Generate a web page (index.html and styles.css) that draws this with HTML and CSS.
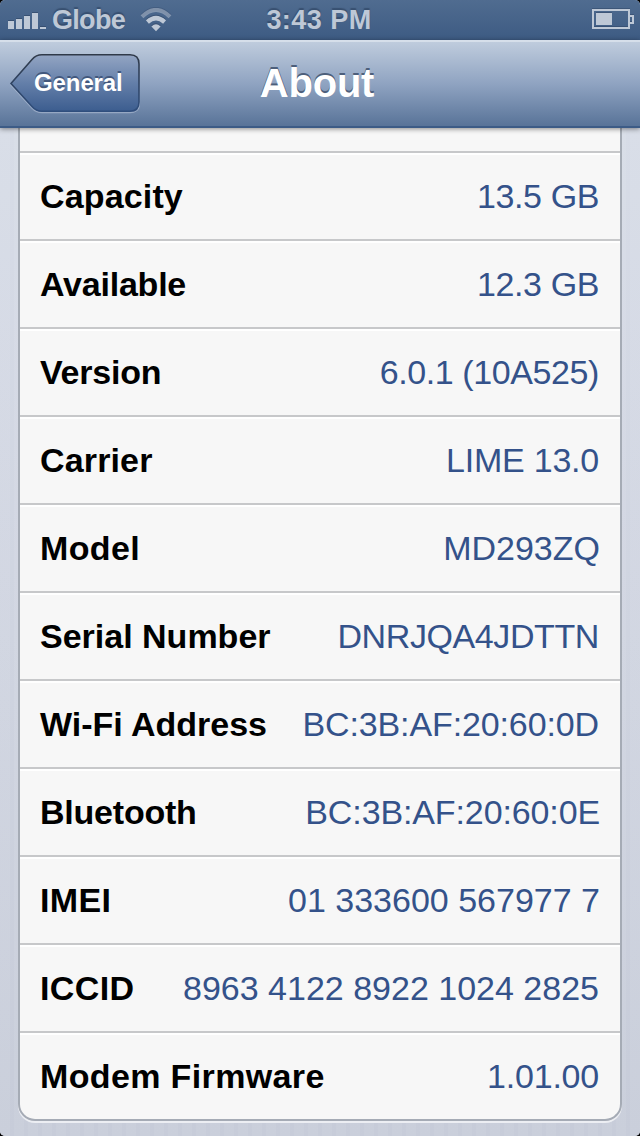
FILE: index.html
```html
<!DOCTYPE html>
<html lang="en">
<head>
<meta charset="utf-8">
<title>About</title>
<link rel="stylesheet" href="styles.css">
</head>
<body>
<div class="screen">
  <header class="status">
    <div class="network">
      <svg class="signal" width="40" height="20" viewBox="0 0 40 20" fill="currentColor"><path d="M0 10h6v8H0zM8 8h6v10H8zM16 5h6v13h-6zM24 2h6v16h-6zM32 16h6v2h-6z"/></svg>
      <span class="carrier">Globe</span>
      <svg class="wifi" width="32" height="24" viewBox="0 0 32 24" fill="none" stroke="currentColor"><path d="M2 8.700Q16-4.800 30 8.700" stroke-width="4" opacity=".5"/><path d="M7.400 14Q16 6.200 24.600 14" stroke-width="4.400"/><path d="M16 23.200L11.400 18.500Q16 13.800 20.600 18.500Z" fill="currentColor" stroke="none"/></svg>
    </div>
    <time class="clock">3:43 PM</time>
    <svg class="battery" width="42" height="20" viewBox="0 0 42 20"><path d="M1 1h36v18H1zM38 7h3v7h-3" fill="none" stroke="currentColor" stroke-width="2"/><path d="M4 4h16v12H4z" fill="currentColor"/></svg>
  </header>
  <nav class="navbar">
    <a class="back">
      <svg class="back-shape" width="132" height="62" viewBox="0 0 132 62">
        <defs>
          <linearGradient id="face" x1="0" y1="0" x2="0" y2="1"><stop offset="0" stop-color="#93a5c3"/><stop offset=".5" stop-color="#647fa9"/><stop offset="1" stop-color="#3c5d8f"/></linearGradient>
          <linearGradient id="edge" x1="0" y1="0" x2="0" y2="1"><stop offset="0" stop-color="#303a49"/><stop offset="1" stop-color="#2f4e7d"/></linearGradient>
        </defs>
        <path d="M34 2.500H122Q131.500 2.500 131.500 12V49Q131.500 58.500 122 58.500H34Q28 58.500 24 54L3 31 24 8Z" fill="none" stroke="#a9b8d0" stroke-width="1.5" opacity=".7"/>
        <path d="M34 .8H122Q131 .8 131 10V48Q131 57.200 122 57.200H34Q28 57.200 24 52.500L3 29.500 24 5.500Q28 .8 34 .8Z" fill="url(#face)" stroke="url(#edge)" stroke-width="1.6"/>
      </svg>
      <span class="back-text">General</span>
    </a>
    <h1 class="title">About</h1>
  </nav>
  <main class="content">
    <dl class="card">
      <div class="row stub"></div>
      <div class="row"><dt class="loose">Capacity</dt><dd class="tight">13.5 GB</dd></div>
      <div class="row"><dt class="snug">Available</dt><dd class="tight">12.3 GB</dd></div>
      <div class="row"><dt class="snug">Version</dt><dd class="tight">6.0.1 (10A525)</dd></div>
      <div class="row"><dt class="loose">Carrier</dt><dd class="snug">LIME 13.0</dd></div>
      <div class="row"><dt class="wide">Model</dt><dd class="outset">MD293ZQ</dd></div>
      <div class="row"><dt>Serial Number</dt><dd class="tight">DNRJQA4JDTTN</dd></div>
      <div class="row"><dt>Wi-Fi Address</dt><dd class="close">BC:3B:AF:20:60:0D</dd></div>
      <div class="row"><dt class="snug">Bluetooth</dt><dd class="close outset">BC:3B:AF:20:60:0E</dd></div>
      <div class="row"><dt class="wide">IMEI</dt><dd class="outset">01 333600 567977 7</dd></div>
      <div class="row"><dt class="wide">ICCID</dt><dd>8963 4122 8922 1024 2825</dd></div>
      <div class="row"><dt class="wide">Modem Firmware</dt><dd class="snug">1.01.00</dd></div>
    </dl>
  </main>
</div>
</body>
</html>
```
FILE: styles.css
```css
* { box-sizing: border-box; }
body { margin: 0; background: #000; font-family: "Liberation Sans", Arial, sans-serif; }
.screen { width: 640px; height: 1136px; border-radius: 5px; overflow: hidden; display: flex; flex-direction: column; background: #ccd1dd; }
.status { height: 40px; flex: none; display: grid; grid-template-columns: 1fr auto 1fr; align-items: center; padding: 0 6px 0 8px; color: #bec8d6; background: linear-gradient(#506c90, #3d5b83); font-size: 27px; font-weight: bold; line-height: 40px; text-shadow: 0 -2px 1px rgba(40, 60, 90, .55); }
.network { display: flex; align-items: center; }
.signal { margin-top: 2px; filter: drop-shadow(0 -1px 0 rgba(40, 60, 90, .5)); }
.carrier { margin-left: 4px; letter-spacing: -.7px; }
.wifi { margin-left: 15px; filter: drop-shadow(0 -1px 0 rgba(40, 60, 90, .5)); }
.clock { letter-spacing: .45px; margin-right: 4px; }
.battery { justify-self: end; margin-top: -2px; filter: drop-shadow(0 -1px 0 rgba(40, 60, 90, .4)); }
.navbar { height: 88px; flex: none; display: grid; grid-template-columns: 1fr auto 1fr; align-items: start; padding: 14px 8px 0; background: linear-gradient(#d6dfea 0 2px, #bfccdd 2px, #8fa3c1 50%, #587398 98%, #3c5b86 98%); z-index: 1; box-shadow: 0 1px 5px rgba(0, 0, 0, .45); }
.back { width: 132px; height: 62px; display: grid; }
.back-shape, .back-text { grid-area: 1 / 1; }
.back-text { padding-left: 26px; line-height: 58px; font-size: 24px; letter-spacing: -.1px; font-weight: bold; color: #fff; text-shadow: 0 -2px 0 #42587d; }
.title { margin: 0 6px 0 0; line-height: 59px; font-size: 40px; letter-spacing: -.2px; color: #fff; text-shadow: 0 -2px 0 #4d5f7b; }
.content { flex: 1; padding: 0 18px 15px; background: repeating-linear-gradient(90deg, rgba(255, 255, 255, .06) 0 10px, transparent 10px 14px), linear-gradient(#d7dce7, #c7ccd9); }
.card { margin: 0; border: 2px solid #a5abb5; border-top: 0; border-radius: 0 0 17px 17px; overflow: hidden; background: #f7f7f7; box-shadow: 0 2px 0 #eceef3; }
.row { height: 88px; border-bottom: 2px solid #c7c8ca; box-shadow: inset 0 2px 0 #fff; display: flex; justify-content: space-between; padding: 0 21px 0 20px; line-height: 87px; font-size: 34px; white-space: nowrap; }
.row:last-child { height: 86px; border-bottom: 0; }
.stub { height: 25px; box-shadow: none; }
dt { font-weight: bold; color: #000; }
dd { margin: 0; color: #34528a; }
.tight { letter-spacing: -.4px; }
.snug { letter-spacing: -.22px; }
.close { letter-spacing: -.12px; }
.loose { letter-spacing: .15px; }
.wide { letter-spacing: .36px; }
.outset { margin-right: -1px; }
```
